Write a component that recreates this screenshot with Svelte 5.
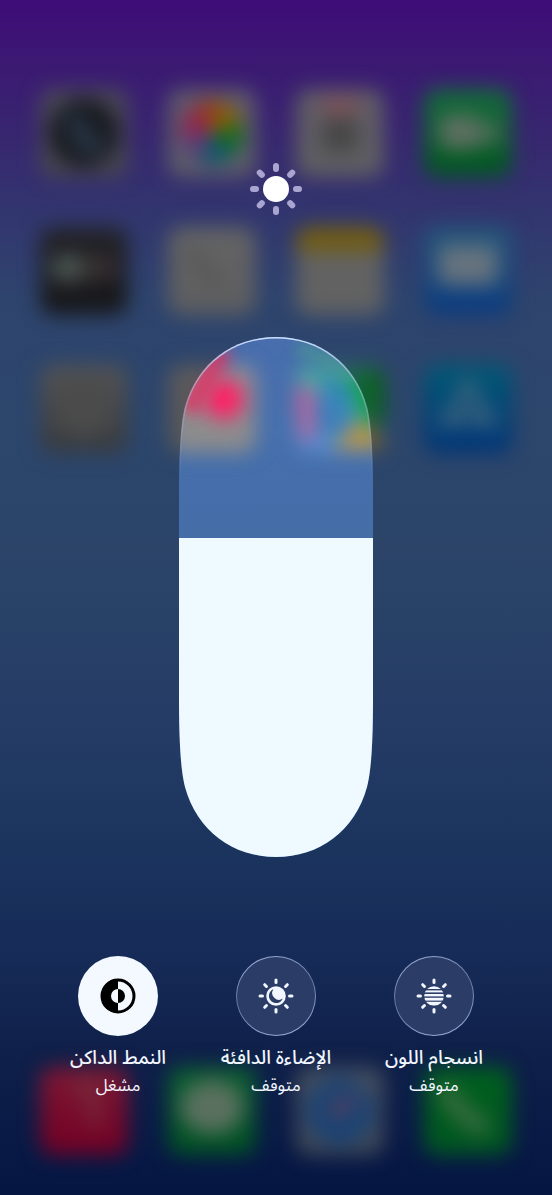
<script lang="ts">
	type Mode = { id: string; title: string; on: boolean };

	const shape =
		'M0 160C0 125 1 89 6 70C18 26 54 0 97 0C140 0 176 26 188 70C193 89 194 125 194 160V360C194 395 193 431 188 450C176 494 140 520 97 520C54 520 18 494 6 450C1 431 0 395 0 360Z';
	const rays = [0, 45, 90, 135, 180, 225, 270, 315];

	const apps = [
		'camera',
		'photos',
		'calendar',
		'facetime',
		'tv',
		'clock',
		'notes',
		'mail',
		'settings',
		'health',
		'maps',
		'store'
	];
	const dock = ['music', 'messages', 'safari', 'phone'];

	const fills: Record<string, [string, string]> = {
		camera: ['#4c4a58', '#484850'],
		photos: ['#5f5a6c', '#5f5f68'],
		calendar: ['#605c66', '#606062'],
		facetime: ['#156b3c', '#00561f'],
		tv: ['#242428', '#161618'],
		clock: ['#646464', '#5e5e60'],
		notes: ['#6a5a20', '#626262'],
		mail: ['#24587a', '#0a3a80'],
		settings: ['#545454', '#373a3e'],
		health: ['#5c5a5c', '#575757'],
		maps: ['#2f6a62', '#345787'],
		store: ['#005a75', '#003377'],
		music: ['#7e1834', '#720024'],
		messages: ['#0c6030', '#005122'],
		safari: ['#47505f', '#414957'],
		phone: ['#00601e', '#005620']
	};

	let level = $state(61.4);
	let modes = $state<Mode[]>([
		{ id: 'tone', title: 'انسجام اللون', on: false },
		{ id: 'warm', title: 'الإضاءة الدافئة', on: false },
		{ id: 'dark', title: 'النمط الداكن', on: true }
	]);
</script>

{#snippet appIcon(name: string)}
	<svg class="app" viewBox="0 0 88 88" aria-hidden="true">
		<defs>
			<linearGradient id="fill-{name}" x1="0" y1="0" x2="0" y2="1">
				<stop offset="0" stop-color={fills[name][0]} />
				<stop offset="1" stop-color={fills[name][1]} />
			</linearGradient>
		</defs>
		<rect width="88" height="88" rx="14" fill="url(#fill-{name})" />
		{#if name === 'camera'}
			<circle cx="44" cy="44" r="35" fill="#181a20" />
			<path d="M24 20L38 26 66 58 56 68 36 58Z" fill="#283748" />
		{:else if name === 'photos'}
			<path d="M44 44L28 16A32 32 0 0 1 54 13Z" fill="#983c18" />
			<path d="M44 44L54 13A32 32 0 0 1 74 34Z" fill="#886400" />
			<path d="M44 44L74 34A32 32 0 0 1 66 66Z" fill="#0c6c1c" />
			<path d="M44 44L66 66A32 32 0 0 1 32 73Z" fill="#0c586c" />
			<path d="M44 44L32 73A32 32 0 0 1 13 48Z" fill="#583c7c" />
			<path d="M44 44L13 48A32 32 0 0 1 28 16Z" fill="#942450" />
		{:else if name === 'calendar'}
			<rect x="26" y="10" width="36" height="14" fill="#845054" />
			<rect x="26" y="29" width="36" height="34" fill="#464646" />
		{:else if name === 'facetime'}
			<rect x="15" y="26" width="42" height="34" rx="8" fill="#5f6f62" />
			<path d="M58 40L74 30V58L58 50Z" fill="#5f6f62" />
		{:else if name === 'tv'}
			<rect x="12" y="29" width="30" height="24" fill="#4c5854" />
			<rect x="42" y="32" width="34" height="18" fill="#3c3434" />
		{:else if name === 'clock'}
			<path d="M18 22L40 42 48 62" stroke="#525252" stroke-width="8" fill="none" />
		{:else if name === 'notes'}
			<path d="M0 24V14A14 14 0 0 1 14 0H74A14 14 0 0 1 88 14V24Z" fill="#735d10" />
			<path d="M0 24H88V74A14 14 0 0 1 74 88H14A14 14 0 0 1 0 74Z" fill="#626262" />
		{:else if name === 'mail'}
			<rect x="14" y="18" width="60" height="40" rx="6" fill="#66737e" />
		{:else if name === 'settings'}
			<circle cx="44" cy="42" r="30" fill="#4b4b4b" />
		{:else if name === 'health'}
			<circle cx="56" cy="34" r="20" fill="#a0143f" />
		{:else if name === 'maps'}
			<path d="M10 16L78 4 88 60 66 56 48 20Z" fill="#12683a" />
			<path d="M0 22H18V76H6Z" fill="#7c3c62" />
			<path d="M18 30H40L60 62 30 74 18 60Z" fill="#274f74" />
			<path d="M24 12H48L60 36 42 50Z" fill="#1f5474" />
			<path d="M66 6H88V60H78Z" fill="#0b601c" />
			<path d="M66 54L88 74V84H34Z" fill="#765d28" />
		{:else if name === 'store'}
			<path d="M44 16L68 64M44 16L20 64M16 54H72" stroke="#40647e" stroke-width="10" fill="none" />
		{:else if name === 'music'}
			<path d="M34 12H60V60H48V28H34Z" fill="#75293a" />
		{:else if name === 'messages'}
			<ellipse cx="44" cy="40" rx="32" ry="27" fill="#5a705f" />
		{:else if name === 'safari'}
			<circle cx="44" cy="44" r="34" fill="#1a4374" />
			<path d="M28 42L66 22 46 52Z" fill="#5c3e5a" />
		{:else if name === 'phone'}
			<path d="M20 20L34 42 62 64" stroke="#3a6c40" stroke-width="18" fill="none" />
		{/if}
	</svg>
{/snippet}

<main class="screen" dir="rtl">
	<div class="home" dir="ltr">
		<div class="apps">
			{#each apps as name}
				{@render appIcon(name)}
			{/each}
		</div>
		<div class="apps">
			{#each dock as name}
				{@render appIcon(name)}
			{/each}
		</div>
	</div>

	<div class="controls">
		<svg class="sun" viewBox="-26 -26 52 52" aria-hidden="true">
			<circle r="13" fill="#fff" />
			{#each rays as angle}
				<rect
					x="-3"
					y="-26"
					width="6"
					height="9"
					rx="3"
					fill="#a9a5d0"
					transform="rotate({angle})"
				/>
			{/each}
		</svg>

		<div class="slider" style:--shape="path('{shape}')">
			<div class="glass">
				<div class="level" style:height="{level}%"></div>
			</div>
			<!-- colour bent in from the icons behind the rounded edge -->
			<svg class="rim refraction" viewBox="0 0 194 520" aria-hidden="true">
				<g filter="url(#soften)">
					<path d="M44 12L8 74" stroke="#dc3464" stroke-width="22" fill="none" />
					<path d="M118 10L150 22 172 42" stroke="#4a9a90" stroke-width="12" fill="none" />
				</g>
				<filter id="soften" x="-20%" y="-50%" width="140%" height="200%">
					<feGaussianBlur stdDeviation="7" />
				</filter>
			</svg>
			<svg class="rim" viewBox="0 0 194 520" aria-hidden="true">
				<defs>
					<linearGradient id="rim" x1="0" y1="0" x2="0" y2="1">
						<stop offset="0" stop-color="#cfe2ff" />
						<stop offset="0.08" stop-color="#b9c6e6" stop-opacity="0.6" />
						<stop offset="0.2" stop-color="#9fb4dd" stop-opacity="0.2" />
						<stop offset="0.3" stop-color="#9fb4dd" stop-opacity="0" />
					</linearGradient>
				</defs>
				<path d={shape} fill="none" stroke="url(#rim)" stroke-width="3" />
			</svg>
			<input type="range" min="0" max="100" step="0.1" bind:value={level} aria-label="السطوع" />
		</div>

		<div class="modes">
			{#each modes as mode (mode.id)}
				<button
					class="mode"
					class:on={mode.on}
					aria-pressed={mode.on}
					onclick={() => (mode.on = !mode.on)}
				>
					<span class="disc">
						<svg class="glyph" viewBox="-18 -18 36 36" aria-hidden="true">
							{#if mode.id === 'dark'}
								<circle r="16" fill="none" stroke="currentColor" stroke-width="3" />
								<path d="M0 -17A17 17 0 0 0 0 17V7A7 7 0 0 1 0 -7Z" fill="currentColor" />
								<path d="M0 -7A7 7 0 0 1 0 7Z" fill="currentColor" />
							{:else}
								{#each rays as angle}
									<path
										d="M0 -16V-13.5"
										stroke="currentColor"
										stroke-width="3"
										stroke-linecap="round"
										transform="rotate({angle})"
									/>
								{/each}
								{#if mode.id === 'warm'}
									<path
										fill-rule="evenodd"
										d="M0 -9.8A9.8 9.8 0 1 0 0 9.8A9.8 9.8 0 1 0 0 -9.8ZM-2.6 -6.8A7.2 7.2 0 1 0 6.8 2.6A6.8 6.8 0 0 1 -2.6 -6.8Z"
										fill="currentColor"
									/>
								{:else}
									<clipPath id="tone-disc"><circle r="9.8" /></clipPath>
									<g clip-path="url(#tone-disc)" fill="currentColor">
										<rect x="-10" y="-10" width="20" height="3" />
										<rect x="-10" y="-5.6" width="20" height="2" />
										<rect x="-10" y="-2" width="20" height="2.4" />
										<rect x="-10" y="1.8" width="20" height="2.8" />
										<rect x="-10" y="5.8" width="20" height="4" />
									</g>
								{/if}
							{/if}
						</svg>
					</span>
					<span class="title">{mode.title}</span>
					<span class="state">{mode.on ? 'مشغل' : 'متوقف'}</span>
				</button>
			{/each}
		</div>
	</div>
</main>

<style>
	:global(body) {
		margin: 0;
		background: #051643;
	}

	.screen {
		display: grid;
		grid-template-columns: minmax(0, 1fr);
		min-height: 100vh;
		overflow: hidden;
		background: linear-gradient(
			#3e0c78 0%,
			#3b1b72 6%,
			#37286f 12%,
			#32366f 18%,
			#2e446d 25%,
			#2c466c 36%,
			#2b4468 46%,
			#253d66 60%,
			#1b345e 71%,
			#162b57 80%,
			#0f204a 88%,
			#051643 100%
		);
		font-family: 'Noto Sans Arabic', 'Noto Sans', 'DejaVu Sans', sans-serif;
	}

	.home,
	.controls {
		grid-area: 1 / 1;
	}

	.home {
		display: flex;
		flex-direction: column;
		justify-content: space-between;
		padding: 89px 40px 40px;
		filter: blur(10px);
	}

	.apps {
		display: grid;
		grid-template-columns: repeat(4, 88px);
		justify-content: space-between;
		row-gap: 50px;
	}

	.app {
		display: block;
		width: 88px;
		height: 88px;
		overflow: visible;
	}

	.controls {
		z-index: 1;
		display: flex;
		flex-direction: column;
		align-items: center;
		padding: 163px 39px 40px;
	}

	.sun {
		width: 52px;
		height: 52px;
	}

	.slider {
		position: relative;
		width: 194px;
		height: 520px;
		margin: 122px 0 99px;
	}

	.glass {
		display: flex;
		flex-direction: column;
		justify-content: flex-end;
		height: 100%;
		clip-path: var(--shape);
		backdrop-filter: brightness(1.6);
	}

	.level {
		background: #eefaff;
	}

	.rim {
		position: absolute;
		inset: 0;
		clip-path: var(--shape);
	}

	.refraction {
		opacity: 0.8;
	}

	.slider input {
		position: absolute;
		inset: 0;
		width: 100%;
		height: 100%;
		margin: 0;
		opacity: 0;
		writing-mode: vertical-lr;
		direction: rtl;
		cursor: pointer;
	}

	.modes {
		display: grid;
		grid-template-columns: repeat(3, 1fr);
		width: 100%;
	}

	.mode {
		display: flex;
		flex-direction: column;
		align-items: center;
		padding: 0;
		border: none;
		background: none;
		color: #f1f6ff;
		font-family: inherit;
		font-size: 17px;
		line-height: 28px;
		white-space: nowrap;
		cursor: pointer;
	}

	.disc {
		display: grid;
		place-items: center;
		box-sizing: border-box;
		width: 80px;
		height: 80px;
		margin-bottom: 8px;
		border-radius: 50%;
		border: 1px solid transparent;
		background:
			linear-gradient(#2b3d66, #2b3d66) padding-box,
			linear-gradient(160deg, #a5b8e4, #63749f 45%, #8194c4 70%, #a5b8e4) border-box;
	}

	.on .disc {
		background: #f3f9ff;
		color: #000;
	}

	.glyph {
		width: 36px;
		height: 36px;
	}

	.title {
		font-size: 19px;
		font-weight: 500;
	}
</style>
